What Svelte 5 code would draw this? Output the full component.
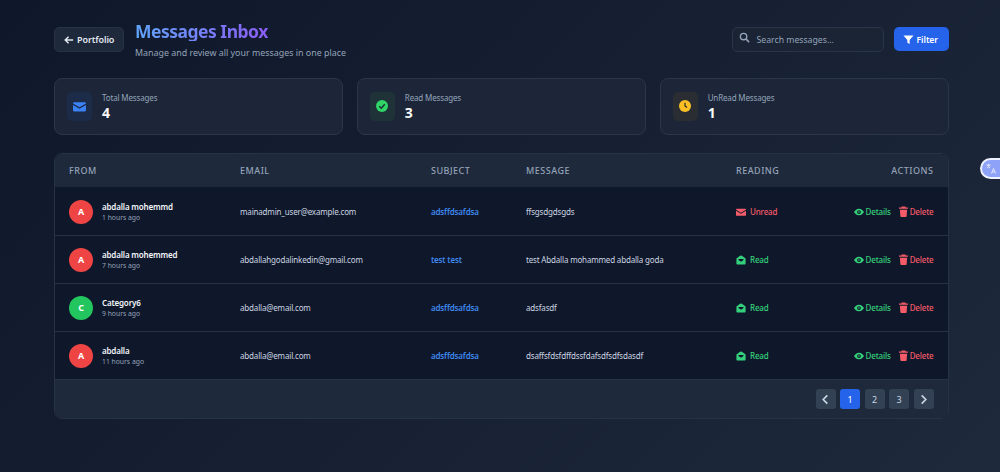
<script>
  const rows = [
    { initial: 'A', color: '#ef4444', name: 'abdalla mohemmd', time: '1 hours ago', email: 'mainadmin_user@example.com', subject: 'adsffdsafdsa', message: 'ffsgsdgdsgds', read: false },
    { initial: 'A', color: '#ef4444', name: 'abdalla mohemmed', time: '7 hours ago', email: 'abdallahgodalinkedin@gmail.com', subject: 'test test', message: 'test Abdalla mohammed abdalla goda', read: true },
    { initial: 'C', color: '#22c55e', name: 'Category6', time: '9 hours ago', email: 'abdalla@email.com', subject: 'adsffdsafdsa', message: 'adsfasdf', read: true },
    { initial: 'A', color: '#ef4444', name: 'abdalla', time: '11 hours ago', email: 'abdalla@email.com', subject: 'adsffdsafdsa', message: 'dsaffsfdsfdffdssfdafsdfsdfsdasdf', read: true }
  ];
</script>

<div class="page">
  <header class="top">
    <button class="back">
      <svg viewBox="0 0 24 24" width="10" height="10"><path d="M11 4 3 12l8 8M3.500 12H22" fill="none" stroke="currentColor" stroke-width="3.600"/></svg>
      Portfolio
    </button>
    <div class="titles">
      <h1>Messages Inbox</h1>
      <p>Manage and review all your messages in one place</p>
    </div>
    <div class="tools">
      <div class="search">
        <svg viewBox="0 0 24 24" width="11" height="11"><circle cx="10" cy="10" r="7" fill="none" stroke="currentColor" stroke-width="3"/><path d="m15 15 7 7" stroke="currentColor" stroke-width="3.400"/></svg>
        <span>Search messages...</span>
      </div>
      <button class="filter">
        <svg viewBox="0 0 24 24" width="11" height="11"><path d="M1 3h22l-8.500 10v9l-5-3v-6z" fill="currentColor"/></svg>
        Filter
      </button>
    </div>
  </header>

  <section class="stats">
    <div class="stat">
      <div class="ico blue"><svg viewBox="0 0 24 24" width="13" height="13"><path d="M0 6a2 2 0 0 1 2-2h20a2 2 0 0 1 2 2v.6l-12 7-12-7zM0 9.200V19a2 2 0 0 0 2 2h20a2 2 0 0 0 2-2V9.200l-12 7z" fill="currentColor"/></svg></div>
      <div><div class="lab">Total Messages</div><div class="num">4</div></div>
    </div>
    <div class="stat">
      <div class="ico green"><svg viewBox="0 0 24 24" width="12" height="12"><circle cx="12" cy="12" r="12" fill="currentColor"/><path d="m6.500 12.500 4 4 7-8" fill="none" stroke="#1c2a33" stroke-width="2.800"/></svg></div>
      <div><div class="lab">Read Messages</div><div class="num">3</div></div>
    </div>
    <div class="stat">
      <div class="ico amber"><svg viewBox="0 0 24 24" width="12" height="12"><circle cx="12" cy="12" r="12" fill="currentColor"/><path d="M12 5.500V12l4 3" fill="none" stroke="#2a2a2c" stroke-width="2.400"/></svg></div>
      <div><div class="lab">UnRead Messages</div><div class="num">1</div></div>
    </div>
  </section>

  <section class="table">
    <div class="row head">
      <div>FROM</div><div>EMAIL</div><div>SUBJECT</div><div>MESSAGE</div><div>READING</div><div class="right">ACTIONS</div>
    </div>
    {#each rows as r}
      <div class="row body">
        <div class="from">
          <span class="avatar" style="background:{r.color}">{r.initial}</span>
          <div><div class="name">{r.name}</div><div class="time">{r.time}</div></div>
        </div>
        <div class="cell">{r.email}</div>
        <div class="subject">{r.subject}</div>
        <div class="cell">{r.message}</div>
        <div class={r.read ? 'state read' : 'state unread'}>
          {#if r.read}
            <svg viewBox="0 0 24 24" width="10" height="10"><path d="M12 1C10 1 3 6 1 8.500V21a2 2 0 0 0 2 2h18a2 2 0 0 0 2-2V8.500C21 6 14 1 12 1zM6 9.500h12v2.500l-6 4-6-4z" fill="currentColor" fill-rule="evenodd"/></svg>
            Read
          {:else}
            <svg viewBox="0 0 24 24" width="10" height="10"><path d="M0 6a2 2 0 0 1 2-2h20a2 2 0 0 1 2 2v.6l-12 7-12-7zM0 9.200V19a2 2 0 0 0 2 2h20a2 2 0 0 0 2-2V9.200l-12 7z" fill="currentColor"/></svg>
            Unread
          {/if}
        </div>
        <div class="actions">
          <span class="details">
            <svg viewBox="0 0 24 24" width="10" height="10"><path d="M12 4C6 4 2 9 0 12c2 3 6 8 12 8s10-5 12-8c-2-3-6-8-12-8zm0 3.500a4.500 4.500 0 1 1 0 9 4.500 4.500 0 0 1 0-9z" fill="currentColor" fill-rule="evenodd"/><circle cx="12" cy="12" r="2" fill="currentColor"/></svg>
            Details
          </span>
          <span class="delete">
            <svg viewBox="2 0 20 24" width="9" height="11" preserveAspectRatio="none"><path d="M8 1h8l1 2h5v3H2V3h5zM4 8h16l-1 14a2 2 0 0 1-2 2H7a2 2 0 0 1-2-2z" fill="currentColor"/></svg>
            Delete
          </span>
        </div>
      </div>
    {/each}
    <footer class="pager">
      <button class="pg"><svg viewBox="0 0 24 24" width="11" height="11"><path d="M16 3 7 12l9 9" fill="none" stroke="currentColor" stroke-width="3.600"/></svg></button>
      <button class="pg on">1</button>
      <button class="pg">2</button>
      <button class="pg">3</button>
      <button class="pg"><svg viewBox="0 0 24 24" width="11" height="11"><path d="m8 3 9 9-9 9" fill="none" stroke="currentColor" stroke-width="3.600"/></svg></button>
    </footer>
  </section>

  <div class="widget">
    <svg viewBox="0 0 24 24" width="12" height="12"><path d="M3 4h8M7 2v2M4 10c2-1 4-3 5-6M5 5c1 2 3 4 5 5M13 21l4-10 4 10M14.500 18h5" fill="none" stroke="#e0e7ff" stroke-width="2"/></svg>
  </div>
</div>

<style>
  :global(body) {
    margin: 0;
    background: #0f172a;
  }
  .page {
    position: relative;
    box-sizing: border-box;
    height: 472px;
    overflow: hidden;
    padding: 22px 51.500px 0 54px;
    font-family: "Noto Sans", sans-serif;
    color: #fff;
    background: linear-gradient(135deg, #0f172a 0%, #1e293b 100%);
  }
  button {
    font-family: inherit;
    cursor: pointer;
  }
  .top {
    display: flex;
    align-items: flex-start;
    height: 56px;
  }
  .back {
    display: flex;
    align-items: center;
    gap: 3px;
    margin: 5px 11px 0 0;
    width: 70px;
    height: 25px;
    padding: 0 0 0 9px;
    border: 1px solid #273245;
    border-radius: 5px;
    background: #1e293b;
    color: #e2e8f0;
    font-size: 9px;
    font-weight: 600;
    letter-spacing: -.1px;
  }
  h1 {
    margin: 0;
    height: 19px;
    font-size: 17.500px;
    line-height: 19px;
    font-weight: 700;
    letter-spacing: -.5px;
    width: max-content;
    background: linear-gradient(90deg, #60a5fa, #8b5cf6);
    -webkit-background-clip: text;
    background-clip: text;
    color: transparent;
  }
  .titles p {
    margin: 5px 0 0;
    font-size: 8.900px;
    line-height: 13px;
    color: #94a3b8;
  }
  .tools {
    display: flex;
    gap: 10px;
    margin: 5px 0 0 auto;
  }
  .search {
    box-sizing: border-box;
    display: flex;
    align-items: center;
    gap: 7px;
    width: 152px;
    height: 25px;
    padding-left: 6px;
    border: 1px solid #293548;
    border-radius: 5px;
    background: #1a2435;
    color: #94a3b8;
    font-size: 8.700px;
  }
  .search svg { margin-top: -5px; }
  .filter {
    display: flex;
    align-items: center;
    gap: 3px;
    height: 24px;
    width: 55px;
    padding: 0 0 0 9px;
    border: 0;
    border-radius: 5px;
    background: #2563eb;
    color: #fff;
    font-size: 8.500px;
    font-weight: 600;
  }
  .stats {
    display: grid;
    grid-template-columns: repeat(3, 1fr);
    gap: 14px;
  }
  .stat {
    display: flex;
    align-items: center;
    gap: 10px;
    box-sizing: border-box;
    height: 57px;
    padding: 0 12px;
    border: 1px solid #2a3649;
    border-radius: 8px;
    background: #1c2638;
  }
  .ico {
    display: grid;
    place-items: center;
    width: 25px;
    height: 29px;
    border-radius: 5px;
    margin-top: -1px;
  }
  .blue { background: #1c2b48; color: #3b82f6; }
  .green { background: #1f3238; color: #2fd667; }
  .amber { background: #2a2e33; color: #fbbf24; }
  .lab {
    font-size: 8px;
    letter-spacing: -.15px;
    line-height: 12px;
    color: #94a3b8;
  }
  .num {
    font-size: 14px;
    line-height: 17px;
    font-weight: 700;
    color: #f8fafc;
  }
  .table {
    margin-top: 18px;
    height: 266px;
    box-sizing: border-box;
    border: 1px solid #263245;
    border-radius: 8px;
    overflow: hidden;
    background: #0f172a;
  }
  .row {
    display: grid;
    grid-template-columns: 171px 191px 95px 210px 1fr 130px;
    align-items: center;
    padding: 0 14px;
  }
  .head {
    box-sizing: border-box;
    height: 34px;
    border-bottom: 1px solid #0f172a;
    background: #1e293b;
    font-size: 9px;
    letter-spacing: .5px;
    font-weight: 500;
    color: #94a3b8;
  }
  .right { text-align: right; }
  .body {
    height: 48px;
    border-bottom: 1px solid #263245;
    font-size: 8px;
    letter-spacing: -.17px;
    box-sizing: border-box;
  }
  .from {
    display: flex;
    align-items: center;
    gap: 9px;
  }
  .avatar {
    display: grid;
    place-items: center;
    flex: none;
    width: 24px;
    height: 24px;
    border-radius: 50%;
    color: #fff;
    font-size: 9px;
    font-weight: 700;
  }
  .name {
    font-size: 8px;
    line-height: 11px;
    font-weight: 600;
    color: #f1f5f9;
  }
  .time {
    margin-top: 1px;
    font-size: 6.800px;
    line-height: 10px;
    letter-spacing: 0;
    color: #94a3b8;
  }
  .cell { color: #cbd5e1; }
  .subject { color: #3f88ee; font-weight: 600; }
  .state {
    display: flex;
    align-items: center;
    gap: 4px;
    font-weight: 500;
  }
  .unread { color: #f45b69; }
  .read { color: #34d07b; }
  .actions {
    display: flex;
    justify-content: flex-end;
    gap: 8px;
    font-weight: 500;
  }
  .actions span {
    display: flex;
    align-items: center;
    gap: 2px;
  }
  .details { color: #34d07b; }
  .delete { color: #f45b69; }
  .pager {
    display: flex;
    justify-content: flex-end;
    align-items: center;
    gap: 4.500px;
    height: 38px;
    padding-right: 14px;
    background: #1e293b;
  }
  .pg {
    display: grid;
    place-items: center;
    width: 20px;
    height: 20px;
    padding: 0;
    border: 0;
    border-radius: 3px;
    background: #334155;
    color: #cbd5e1;
    font-size: 9px;
  }
  .on { background: #2563eb; color: #fff; }
  .widget {
    position: absolute;
    top: 160px;
    left: 982px;
    display: grid;
    place-items: center;
    width: 18px;
    height: 17px;
    border-radius: 9px 0 0 9px;
    background: #8ea2f8;
    box-shadow: 0 0 0 2px #eef2ff;
  }
</style>
